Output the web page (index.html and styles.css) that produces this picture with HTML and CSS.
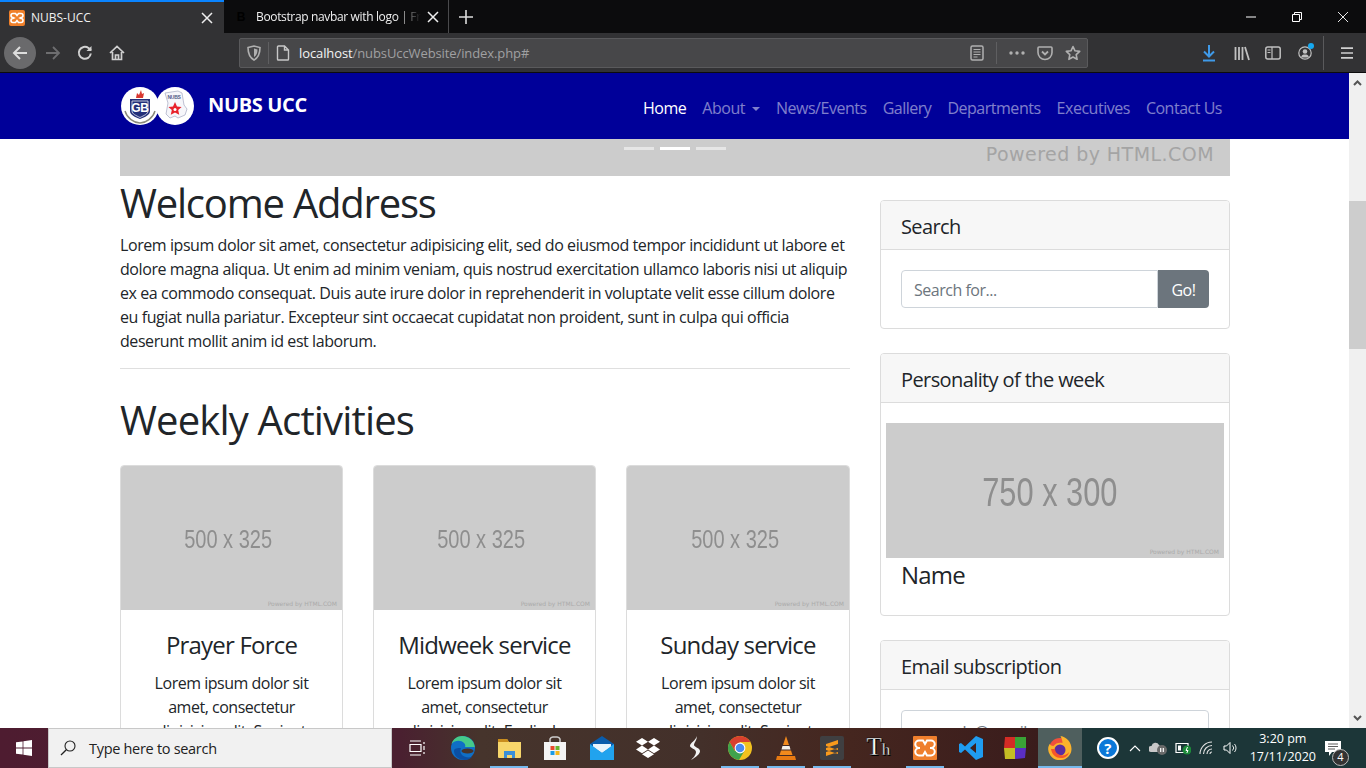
FILE: index.html
```html
<!doctype html>
<html>
<head>
<meta charset="utf-8">
<title>NUBS-UCC</title>
<link rel="stylesheet" href="styles.css">
</head>
<body>

<div class="tabbar">
	<div class="tab tab-on">
		<svg class="fav" width="16" height="16" viewBox="0 0 16 16"><rect width="16" height="16" rx="2" fill="#f0802a"/><path d="M4 3.500h2.500L8 5.500l1.500-2H12a1.500 1.500 0 0 1 0 4L11 8l1 .5a1.500 1.500 0 0 1 0 4H9.500L8 10.500l-1.500 2H4a1.500 1.500 0 0 1 0-4L5 8l-1-.5a1.500 1.500 0 0 1 0-4z" fill="none" stroke="#fff" stroke-width="1.600"/></svg>
		<span class="tab-name">NUBS-UCC</span>
		<svg class="tab-x" width="12" height="12" viewBox="0 0 12 12"><path d="M1 1l10 10M11 1L1 11" stroke="#eee" stroke-width="1.500"/></svg>
	</div>
	<div class="tab tab-off">
		<span class="fav-b">B</span>
		<span class="tab-name tab-fade">Bootstrap navbar with logo | Free</span>
		<svg class="tab-x" width="12" height="12" viewBox="0 0 12 12"><path d="M1 1l10 10M11 1L1 11" stroke="#eee" stroke-width="1.500"/></svg>
	</div>
	<svg class="tab-plus" width="14" height="14" viewBox="0 0 14 14"><path d="M7 0v14M0 7h14" stroke="#ddd" stroke-width="1.600"/></svg>
	<div class="win-btns">
		<svg width="12" height="12" viewBox="0 0 12 12"><path d="M1 6h10" stroke="#fff"/></svg>
		<svg width="12" height="12" viewBox="0 0 12 12"><path d="M3.500 3V1.500h7v7H9M1.500 3.500h7v7h-7z" fill="none" stroke="#fff"/></svg>
		<svg width="12" height="12" viewBox="0 0 12 12"><path d="M1 1l10 10M11 1L1 11" stroke="#fff" stroke-width=".9"/></svg>
	</div>
</div>

<div class="toolbar">
	<div class="back-btn">
		<svg width="16" height="16" viewBox="0 0 16 16"><path d="M15 8H2M8 2L2 8l6 6" fill="none" stroke="#ddd" stroke-width="2"/></svg>
	</div>
	<svg class="nav-ico" width="16" height="16" viewBox="0 0 16 16"><path d="M1 8h13M8 2l6 6-6 6" fill="none" stroke="#6e6e70" stroke-width="1.800"/></svg>
	<svg class="nav-ico" width="16" height="16" viewBox="0 0 16 16"><path d="M13.800 8.500A6 6 0 1 1 11.500 3L14 5" fill="none" stroke="#d0d0d0" stroke-width="2"/><path d="M14.500 1v5h-5z" fill="#d0d0d0"/></svg>
	<svg class="nav-ico" width="16" height="16" viewBox="0 0 16 16"><path d="M1 8l7-6.500L15 8M3.500 7v7.500h9V7M6.500 14.500V10h3v4.500" fill="none" stroke="#d0d0d0" stroke-width="1.700"/></svg>
	<div class="urlbar">
		<svg width="14" height="16" viewBox="0 0 14 16"><path d="M1 2.500L7 1l6 1.500c0 6-1.500 10-6 12.500C2.500 12.500 1 8.500 1 2.500z" fill="none" stroke="#b0b0b0" stroke-width="1.600"/><path d="M7 3.500l3.500 1C10.500 8 9.500 10.500 7 12z" fill="#b0b0b0"/></svg>
		<i class="url-sep"></i>
		<svg width="14" height="16" viewBox="0 0 14 16"><path d="M2.500 1h6L12.500 5v9.200a.8.8 0 0 1-.8.800H2.300a.8.8 0 0 1-.8-.8V2a1 1 0 0 1 1-1zM8.500 1v4h4" fill="none" stroke="#c8c8c8" stroke-width="1.400"/></svg>
		<span class="url-text"><b>localhost</b>/nubsUccWebsite/index.php#</span>
		<svg class="url-right" width="14" height="16" viewBox="0 0 14 16"><rect x="1" y="1" width="12" height="14" rx="1.500" fill="none" stroke="#b0b0b0" stroke-width="1.500"/><path d="M3.500 4.500h7M3.500 7h7M3.500 9.500h7M3.500 12h4" stroke="#b0b0b0"/></svg>
		<i class="url-sep url-sep2"></i>
		<svg width="16" height="4" viewBox="0 0 16 4"><circle cx="2" cy="2" r="1.700" fill="#b0b0b0"/><circle cx="8" cy="2" r="1.700" fill="#b0b0b0"/><circle cx="14" cy="2" r="1.700" fill="#b0b0b0"/></svg>
		<svg width="16" height="16" viewBox="0 0 16 16"><path d="M2 2h12a1 1 0 0 1 1 1v4.500a7 7 0 0 1-14 0V3a1 1 0 0 1 1-1z" fill="none" stroke="#b0b0b0" stroke-width="1.600"/><path d="M5 6.500l3 3 3-3" fill="none" stroke="#b0b0b0" stroke-width="1.800"/></svg>
		<svg width="16" height="16" viewBox="0 0 16 16"><path d="M8 1.500l2 4.300 4.700.6-3.500 3.200.9 4.700L8 12l-4.100 2.300.9-4.700L1.300 6.400l4.700-.6z" fill="none" stroke="#b0b0b0" stroke-width="1.600" stroke-linejoin="round"/></svg>
	</div>
	<div class="tool-right">
		<svg width="14" height="18" viewBox="0 0 14 18"><path d="M7 1v11M2 7.500l5 5 5-5" fill="none" stroke="#3f9ae8" stroke-width="2"/><path d="M1 16.500h12" stroke="#3f9ae8" stroke-width="2"/></svg>
		<svg class="ico-lib" width="16" height="16" viewBox="0 0 16 16"><path d="M1.500 2v13M5 2v13M8.500 2v13M11 2l4 13" stroke="#c0c0c0" stroke-width="1.800" fill="none"/></svg>
		<svg class="ico-side" width="16" height="14" viewBox="0 0 16 14"><rect x=".8" y="1" width="14.400" height="12" rx="2" fill="none" stroke="#c0c0c0" stroke-width="1.500"/><path d="M7 1v12M2.500 4h3M2.500 6.500h3" stroke="#c0c0c0" stroke-width="1.200"/></svg>
		<div class="acct">
			<svg width="14" height="14" viewBox="0 0 14 14"><circle cx="7" cy="7" r="6.200" fill="none" stroke="#c0c0c0" stroke-width="1.200"/><circle cx="7" cy="5.500" r="2.300" fill="#c0c0c0"/><path d="M3 11.500c.5-2.500 2-3 4-3s3.500.5 4 3" fill="#c0c0c0"/></svg>
			<i class="acct-dot"></i>
		</div>
		<i class="tool-sep"></i>
		<svg width="12" height="12" viewBox="0 0 12 12"><path d="M0 1.200h12M0 6h12M0 10.800h12" stroke="#d0d0d0" stroke-width="1.700"/></svg>
	</div>
</div>

<div class="viewport">
	<div class="page">
		<nav class="navbar">
			<div class="container nav-in">
				<a class="brand" href="#">
					<svg class="logo" width="75" height="38" viewBox="0 0 75 38">
						<circle cx="55" cy="19" r="19" fill="#fff"/>
						<path d="M45 6l13-2 4 2 2 12 3 4-2 6-7 3-3-2-5 2-4-4 2-11z" fill="#f6f6fa" stroke="#aeb2c8" stroke-width=".8"/>
						<text x="54" y="12" font-size="5" text-anchor="middle" fill="#555c88" font-family="Liberation Sans">NUBS</text>
						<path d="M55 15l2 4.400 4.600.6-3.400 3.100 1 4.700L55 25.400l-4.200 2.400 1-4.700-3.400-3.100 4.600-.6z" fill="#e8202a"/>
						<circle cx="55" cy="22.500" r="1.500" fill="#fff"/>
						<circle cx="20" cy="19" r="19" fill="#fff"/>
						<path d="M10 12h20v12c0 4-5 6-10 8-5-2-10-4-10-8z" fill="#23307a"/>
						<path d="M12 14h16v10c0 3-4 4.500-8 6.500-4-2-8-3.500-8-6.500z" fill="none" stroke="#fff" stroke-width=".7"/>
						<text x="20" y="25" font-size="12" font-weight="bold" text-anchor="middle" fill="#fff" font-family="Liberation Sans">GB</text>
						<path d="M16 11l1-5 2 2 2-5 1 4 2-1-1 5z" fill="#d8372f"/>
						<path d="M5 24c2 7 9 12 15 12s13-5 15-12" fill="none" stroke="#8a8a7a" stroke-width="1.400"/>
					</svg>
					<span class="brand-name">NUBS UCC</span>
				</a>
				<ul class="nav-links">
					<li class="active"><a href="#">Home</a></li>
					<li><a href="#">About<i class="caret"></i></a></li>
					<li><a href="#">News/Events</a></li>
					<li><a href="#">Gallery</a></li>
					<li><a href="#">Departments</a></li>
					<li><a href="#">Executives</a></li>
					<li><a href="#">Contact Us</a></li>
				</ul>
			</div>
		</nav>

		<div class="container">
			<div class="carousel">
				<ol class="indicators"><li></li><li class="on"></li><li></li></ol>
				<span class="powered-big">Powered by HTML.COM</span>
			</div>
			<div class="row">
				<main class="col-main">
					<h1 class="welcome">Welcome Address</h1>
					<p class="intro">Lorem ipsum dolor sit amet, consectetur adipisicing elit, sed do eiusmod tempor incididunt ut labore et dolore magna aliqua. Ut enim ad minim veniam, quis nostrud exercitation ullamco laboris nisi ut aliquip ex ea commodo consequat. Duis aute irure dolor in reprehenderit in voluptate velit esse cillum dolore eu fugiat nulla pariatur. Excepteur sint occaecat cupidatat non proident, sunt in culpa qui officia deserunt mollit anim id est laborum.</p>
					<hr>
					<h1 class="weekly">Weekly Activities</h1>
					<div class="cards">
						<div class="card">
							<div class="ph ph-card"><span>500 x 325</span><small>Powered by HTML.COM</small></div>
							<div class="card-body">
								<h4>Prayer Force</h4>
								<p>Lorem ipsum dolor sit amet, consectetur adipisicing elit. Sapiente esse</p>
							</div>
						</div>
						<div class="card">
							<div class="ph ph-card"><span>500 x 325</span><small>Powered by HTML.COM</small></div>
							<div class="card-body">
								<h4>Midweek service</h4>
								<p>Lorem ipsum dolor sit amet, consectetur adipisicing elit. Explicabo esse</p>
							</div>
						</div>
						<div class="card">
							<div class="ph ph-card"><span>500 x 325</span><small>Powered by HTML.COM</small></div>
							<div class="card-body">
								<h4>Sunday service</h4>
								<p>Lorem ipsum dolor sit amet, consectetur adipisicing elit. Sapiente esse</p>
							</div>
						</div>
					</div>
				</main>
				<aside class="col-side">
					<div class="box">
						<h5 class="box-head">Search</h5>
						<div class="box-body">
							<div class="input-group">
								<input class="field field-join" type="text" placeholder="Search for...">
								<button class="go" type="button">Go!</button>
							</div>
						</div>
					</div>
					<div class="box">
						<h5 class="box-head">Personality of the week</h5>
						<div class="person">
							<div class="ph ph-person"><span>750 x 300</span><small>Powered by HTML.COM</small></div>
							<h4 class="person-name">Name</h4>
						</div>
					</div>
					<div class="box">
						<h5 class="box-head">Email subscription</h5>
						<div class="box-body">
							<input class="field field-full" type="text" placeholder="example@email.com">
						</div>
					</div>
				</aside>
			</div>
		</div>
	</div>
	<div class="scrollbar">
		<svg width="9" height="6" viewBox="0 0 9 6"><path d="M1 5l3.500-3.500L8 5" fill="none" stroke="#555" stroke-width="2"/></svg>
		<div class="track"><div class="thumb"></div></div>
		<svg width="9" height="6" viewBox="0 0 9 6"><path d="M1 1l3.500 3.500L8 1" fill="none" stroke="#555" stroke-width="2"/></svg>
	</div>
</div>

<div class="taskbar">
	<div class="start">
		<svg width="16" height="16" viewBox="0 0 16 16"><path d="M0 2.300l6.600-.9v6.200H0zM7.400 1.300L16 0v7.600H7.400zM0 8.400h6.600v6.200L0 13.700zM7.400 8.400H16V16l-8.600-1.300z" fill="#fff"/></svg>
	</div>
	<div class="search">
		<svg width="16" height="16" viewBox="0 0 16 16"><circle cx="10" cy="6" r="5" fill="none" stroke="#222" stroke-width="1.100"/><path d="M6.300 9.700L1 15" stroke="#222" stroke-width="1.300"/></svg>
		<span>Type here to search</span>
	</div>
	<div class="task-icons">
		<div class="ti">
			<svg width="16" height="16" viewBox="0 0 16 16"><path d="M1 1h11M1 15h11M1 4.500h11v7H1z" fill="none" stroke="#fff" stroke-width="1.200"/><path d="M15 2v2M15 6v4M15 12v2" stroke="#fff" stroke-width="1.200"/></svg>
		</div>
		<div class="ti">
			<svg width="24" height="24" viewBox="0 0 24 24"><circle cx="12" cy="12" r="12" fill="#0f6fc6"/><path d="M24 13C24 5 18 0 11 0 6 0 2 3 .5 8 4 4 10 4 13 7c1.500 1.500 1.500 3 1 4h9.500z" fill="#45c98a"/><path d="M3 15c0 6 6 9 11 9 3 0 5-1 7-3-4 1-8 0-10-2-2-2-2-5-1-7-3 0-7 0-7 3z" fill="#0b4fa3"/><ellipse cx="16.500" cy="15" rx="6" ry="2.600" fill="#46342c"/></svg>
		</div>
		<div class="ti ti-run">
			<svg width="23" height="20" viewBox="0 0 23 20"><path d="M0 1h9l2 3h12v15a1 1 0 0 1-1 1H1a1 1 0 0 1-1-1z" fill="#f7d66b"/><path d="M0 1h9l2 3H0z" fill="#c98d1e"/><path d="M6 13h11v7h-3v-3H9v3H6z" fill="#3a8fd8"/></svg>
		</div>
		<div class="ti">
			<svg width="24" height="24" viewBox="0 0 24 24"><path d="M7 7V3a3 3 0 0 1 3-2h4a3 3 0 0 1 3 2v4" fill="none" stroke="#ccc" stroke-width="1.500"/><rect x="1" y="6" width="22" height="18" fill="#f4f4f4"/><rect x="7.500" y="10" width="4" height="4" fill="#e8492c"/><rect x="12.500" y="10" width="4" height="4" fill="#6ab52e"/><rect x="7.500" y="15" width="4" height="4" fill="#1c9be6"/><rect x="12.500" y="15" width="4" height="4" fill="#f6b81b"/></svg>
		</div>
		<div class="ti">
			<svg width="24" height="24" viewBox="0 0 24 24"><path d="M0 8L12 0l12 8v16H0z" fill="#0a5cab"/><path d="M3 8h18v3l-9 6-9-6z" fill="#e8f4fc"/><path d="M0 8l12 9 12-9v16H0z" fill="#21a3ee"/></svg>
		</div>
		<div class="ti">
			<svg width="24" height="20" viewBox="0 0 24 20"><path d="M6 0l6 3.800L6 7.600 0 3.800zM18 0l6 3.800-6 3.800-6-3.800zM6 7.600l6 3.800-6 3.800-6-3.800zM18 7.600l6 3.800-6 3.800-6-3.800zM12 12.500l6 3.700-6 3.800-6-3.800z" fill="#fff"/></svg>
		</div>
		<div class="ti">
			<svg width="12" height="24" viewBox="0 0 12 24"><path d="M9 0C8 4 2 7 2 10c0 2 6 3 6 6 0 3-3 6-5 8 5-3 9-6 9-9 0-3-6-4-6-6 0-2 3-5 3-9z" fill="#f2f2f2"/></svg>
		</div>
		<div class="ti ti-run">
			<svg width="24" height="24" viewBox="0 0 24 24"><circle cx="12" cy="12" r="12" fill="#f2c21f"/><path d="M12 0a12 12 0 0 0-10.400 6L6.800 15 12 6h10.400A12 12 0 0 0 12 0z" fill="#d8402e"/><path d="M1.600 6A12 12 0 0 0 11 24l5.300-9-9.500 0z" fill="#3fa24c"/><circle cx="12" cy="12" r="5.400" fill="#fff"/><circle cx="12" cy="12" r="4.300" fill="#4a8af0"/></svg>
		</div>
		<div class="ti ti-run">
			<svg width="20" height="24" viewBox="0 0 20 24"><path d="M10 0l3 9H7z" fill="#f28a1c"/><path d="M6.500 10h7l1 3.500h-9z" fill="#f4f0ea"/><path d="M5 14.500h10l1.500 4.500h-13z" fill="#f28a1c"/><path d="M1 20h18l1 4H0z" fill="#e87a12"/></svg>
		</div>
		<div class="ti ti-run">
			<svg width="24" height="24" viewBox="0 0 24 24"><rect width="24" height="24" rx="2" fill="#3f3f41"/><path d="M18 4L6 8v4l12-4zM6 10l12 4v4L6 14zM18 12L6 16v4l12-4z" fill="#f89a1c"/></svg>
		</div>
		<div class="ti">
			<span class="th">T<small>h</small></span>
		</div>
		<div class="ti ti-run">
			<svg width="24" height="24" viewBox="0 0 24 24"><rect width="24" height="24" rx="1" fill="#ef7f2d"/><path d="M6 4.500h4L12 8l2-3.500h4a3 3 0 0 1 0 7.500h-1 1a3 3 0 0 1 0 7.500h-4L12 16l-2 3.500H6A3 3 0 0 1 6 12h1-1a3 3 0 0 1 0-7.500z" fill="none" stroke="#fff" stroke-width="2"/></svg>
		</div>
		<div class="ti">
			<svg width="24" height="24" viewBox="0 0 24 24"><path d="M17 0l7 3v18l-7 3L6 13.500 2 17l-2-1V8l2-1 4 3.500zM17 7l-6 5 6 5z" fill="#1f9cf0"/></svg>
		</div>
		<div class="ti ti-multi">
			<svg width="23" height="24" viewBox="0 0 23 24"><path d="M1 1h10v11H0z" fill="#d42c25"/><path d="M11 1h11v11H11z" fill="#3aa236"/><path d="M0 12h11v11H1z" fill="#c4bd24"/><path d="M11 12h11l-1 10-10 1z" fill="#5a2ec2"/></svg>
		</div>
		<div class="ti ti-active">
			<svg width="24" height="24" viewBox="0 0 24 24"><circle cx="12" cy="13" r="11" fill="#f0503c"/><path d="M1.500 8c1 1 2 2 4 2 2-3 6-4 9-3 0-2-1-5-2-7 6 1 11 6 11 13 0 6-5 11-11 11a11 11 0 0 1-11-16z" fill="#fbb32c"/><circle cx="12" cy="14" r="5.500" fill="#5b2ca0"/><path d="M3 13c1 6 5 9 10 9 4 0 7-2 8-6-2 3-6 4-9 3-3-1-5-3-5-6z" fill="#f5562a"/></svg>
		</div>
	</div>
	<div class="tray">
		<div class="help">?</div>
		<svg width="12" height="7" viewBox="0 0 12 7"><path d="M1 6l5-5 5 5" fill="none" stroke="#fff" stroke-width="1.100"/></svg>
		<svg width="18" height="14" viewBox="0 0 18 14"><path d="M2 11a3 3 0 0 1 .5-6A4 4 0 0 1 10 4a3 3 0 0 1 1 1v6z" fill="#c8c8c8"/><circle cx="13" cy="9" r="5" fill="#6a6a6a"/><path d="M11.700 7v4M14.300 7v4" stroke="#fff" stroke-width="1.200"/></svg>
		<svg width="16" height="14" viewBox="0 0 16 14"><path d="M1 2.500h12v9H1z" fill="none" stroke="#fff" stroke-width="1.200"/><path d="M3 4.500h3v5H3z" fill="#fff"/><circle cx="12" cy="9" r="4.500" fill="#1d8a3a"/><path d="M12.500 6L11 9.500h2L11.800 12" stroke="#fff" fill="none"/></svg>
		<svg width="16" height="14" viewBox="0 0 16 14"><path d="M1 13A12 12 0 0 1 13 1M4.500 13A8.500 8.500 0 0 1 13 4.500M8 13a5 5 0 0 1 5-5M11 13a2 2 0 0 1 2-2" fill="none" stroke="#e4e4e4" stroke-width="1.100"/></svg>
		<svg width="16" height="14" viewBox="0 0 16 14"><path d="M1 5h2.500L7 1.500v11L3.500 9H1z" fill="none" stroke="#fff" stroke-width="1"/><path d="M9.500 4.500a3.500 3.500 0 0 1 0 5M11.500 3a6 6 0 0 1 0 8" fill="none" stroke="#fff" stroke-width=".9"/></svg>
		<div class="clock"><span>3:20 pm</span><span>17/11/2020</span></div>
		<div class="notif">
			<svg width="16" height="15" viewBox="0 0 16 15"><path d="M0 0h16v11H7l-3 4v-4H0z" fill="#fff"/><path d="M3 3h10M3 5.500h10M3 8h7" stroke="#333" stroke-width=".8"/></svg>
			<b class="notif-num">4</b>
		</div>
	</div>
</div>

</body>
</html>
```

FILE: styles.css
```css
*{
	margin:0; padding:0; box-sizing:border-box; list-style:none;
}
html,body{
	height:100%; overflow:hidden;
}
body{
	display:flex; flex-direction:column; background:#fff;
	font-family:"Open Sans","Noto Sans","Liberation Sans",sans-serif;
	font-size:16px; line-height:24px; color:#212529;
}
a{ text-decoration:none; }
svg{ display:block; flex:none; }

/* browser chrome */
.tabbar{
	height:33px; background:#0c0c0d; display:flex; align-items:stretch; flex:none;
	font-size:12px; color:#f0f0f0;
}
.tab{
	display:flex; align-items:center; height:33px; position:relative;
}
.tab-on{
	width:224px; background:#323234; border-top:2px solid #0a84ff; padding:0 11px 0 9px;
}
.tab-off{
	width:225px; padding:0 9px 0 9px; border-right:1px solid #4a4a4c;
}
.tab-name{ margin-left:6px; white-space:nowrap; flex:1; overflow:hidden; }
.tab-fade{
	margin-left:7px; letter-spacing:-.35px;
	-webkit-mask-image:linear-gradient(90deg,#000 85%,transparent);
	mask-image:linear-gradient(90deg,#000 85%,transparent);
}
.tab-x{ margin-left:6px; }
.fav-b{
	width:16px; text-align:center; font-weight:bold; font-size:12px; color:#000;
	font-family:"Liberation Sans",sans-serif;
}
.tab-plus{ align-self:center; margin-left:10px; }
.win-btns{
	margin-left:auto; display:flex; align-items:center; gap:34px; padding-right:17px;
}

.toolbar{
	height:40px; background:#323234; display:flex; align-items:center; flex:none;
	padding-left:4px; border-bottom:1px solid #0c0c0d;
}
.back-btn{
	width:32px; height:32px; border-radius:50%; background:#6a6a6c;
	display:flex; align-items:center; justify-content:center;
}
.nav-ico{ margin-left:16px; }
.back-btn + .nav-ico{ margin-left:9px; }
.urlbar{
	width:849px; height:30px; margin-left:114px;
	background:#474749; border:1px solid #5a5a5c; border-radius:2px;
	display:flex; align-items:center; padding:0 6px 0 7px; font-size:13px;
}
.url-sep{ width:1px; height:22px; background:#5f5f61; margin:0 7px; }
.url-sep2{ margin:0 12px 0 12px; }
.url-text{ color:#a0a0a2; margin-left:9px; flex:1; white-space:nowrap; letter-spacing:-.1px; }
.url-text b{ font-weight:normal; color:#f4f4f4; }
.urlbar svg:nth-last-of-type(2){ margin-right:12px; }
.urlbar svg:nth-last-of-type(3){ margin-right:12px; }
.tool-right{
	display:flex; align-items:center; margin-left:auto; height:100%;
}
.tool-right > svg:first-child{ margin-right:17px; position:relative; left:-1px; }
.ico-lib{ margin-right:15px; }
.ico-side{ margin-right:17px; }
.acct{ position:relative; }
.acct-dot{
	position:absolute; left:10px; top:-3px; width:6px; height:6px; border-radius:50%;
	background:#16a9f0;
}
.tool-sep{ width:1px; height:34px; background:#5a5a5c; margin:0 17px 0 11px; }
.tool-right > svg:last-child{ margin-right:13px; }

/* page */
.viewport{
	flex:1; display:flex; overflow:hidden; min-height:0;
}
.page{ flex:1; min-width:0; letter-spacing:-.48px; }
.container{ width:1140px; padding:0 15px; margin-left:105px; }
.navbar{ height:66px; background:#000099; }
.nav-in{ display:flex; align-items:center; height:100%; }
.brand{ display:flex; align-items:center; color:#fff; font-size:20px; font-weight:bold; letter-spacing:-.35px; }
.logo{ margin-right:13px; }
.brand-name{ position:relative; top:-1px; }
.nav-links{ margin-left:auto; display:flex; gap:16px; font-size:16px; position:relative; top:2px; padding-right:8px; }
.nav-links a{ color:rgba(255,255,255,.5); white-space:nowrap; }
.nav-links .active a{ color:#fff; }
.caret{
	display:inline-block; width:0; height:0; margin-left:7px; vertical-align:3px;
	border-top:4.800px solid; border-left:4.800px solid transparent; border-right:4.800px solid transparent;
}

.carousel{
	height:37px; background:#ccc; position:relative; overflow:hidden;
}
.indicators{
	position:absolute; left:504px; top:8px; display:flex; gap:6px;
}
.indicators li{ width:30px; height:3px; background:#fff; opacity:.5; }
.indicators li.on{ opacity:1; }
.powered-big{
	position:absolute; right:16px; top:3px; font-family:"DejaVu Sans",sans-serif; font-size:19px;
	color:#a4a4a4; letter-spacing:.45px;
}

.row{ display:flex; gap:30px; }
.col-main{ width:730px; }
.col-side{ width:350px; padding-top:24px; }
h1{ font-size:40px; font-weight:normal; line-height:48px; }
.welcome{ margin-top:3px; margin-bottom:6px; letter-spacing:-1.21px; }
.intro{ margin-bottom:15px; letter-spacing:-.425px; }
hr{ border:0; border-top:1px solid #dfdfdf; }
.weekly{ margin-top:27px; margin-bottom:21px; letter-spacing:-.83px; }
.cards{ display:grid; grid-template-columns:223px 223px 224px; column-gap:30px; }
.card{
	border:1px solid #dcdcdc; border-radius:4px; overflow:hidden; text-align:center;
}
.card-body{ padding:20px; }
.card-body h4{ font-size:24px; font-weight:normal; line-height:30px; margin-bottom:11px; white-space:nowrap; letter-spacing:-.8px; }
.ph{
	background:#ccc; position:relative; display:flex; align-items:center; justify-content:center;
	color:#8e8e8e; font-family:"Liberation Sans",sans-serif; letter-spacing:0;
}
.ph span{ display:block; transform:scaleX(.77); }
.ph small{
	position:absolute; right:5px; bottom:2px; font-size:6px; line-height:9px; color:#aaa;
	font-family:"DejaVu Sans",sans-serif;
}
.ph-card{ height:144px; font-size:26px; padding:2px 6px 0 0; }
.ph-person{ height:135px; font-size:40px; padding:3px 10px 0 0; }

.box{
	border:1px solid #dcdcdc; border-radius:4px; margin-bottom:24px; overflow:hidden;
}
.box-head{
	font-size:20px; font-weight:normal; line-height:24px; padding:14px 20px 10px;
	height:49px; background:#f7f7f7; border-bottom:1px solid #dcdcdc; letter-spacing:-.6px;
}
.box-body{ padding:20px; }
.input-group{ display:flex; }
.field{
	height:38px; border:1px solid #ced4da; border-radius:4px; padding:1px 12px 0;
	font:inherit; letter-spacing:-.48px; color:#495057; background:#fff;
}
.field::placeholder{ color:#6c757d; opacity:1; }
.field-join{ flex:1; min-width:0; border-radius:4px 0 0 4px; }
.field-full{ width:100%; padding-top:5px; }
.go{
	width:51px; height:38px; background:#6c757d; color:#fff; border:0; border-radius:0 4px 4px 0;
	font:inherit; letter-spacing:-.48px; padding-top:1px;
}
.person{ padding:20px 5px 25px; }
.person-name{ font-size:24px; font-weight:normal; line-height:30px; padding:2px 15px 0; letter-spacing:-.8px; }

.scrollbar{
	width:17px; background:#f0f0f0; display:flex; flex-direction:column; align-items:center;
	padding:7px 0; flex:none;
}
.track{ flex:1; width:100%; margin:0; padding-top:115px; }
.thumb{ height:148px; background:#cdcdcd; }

/* taskbar */
.taskbar{
	height:40px; flex:none; display:flex; align-items:stretch;
	background:linear-gradient(90deg,#4e1c30 0,#4a2030 400px,#46342c 480px,#43302a 700px,#45261f 850px,#3a1c1c 1038px);
}
.start{ width:48px; display:flex; align-items:center; justify-content:center; flex:none; }
.search{
	width:344px; flex:none; background:#f1f1f1; border:1px solid #c8c8c8; display:flex; align-items:center;
	gap:13px; padding-left:11px; font-size:14.500px; color:#222; letter-spacing:-.3px;
}
.search span{ position:relative; top:1px; }
.task-icons{ display:flex; flex:none; margin-left:2px; }
.ti{
	width:46.150px; display:flex; align-items:center; justify-content:center; position:relative;
}
.ti-multi{ width:44px; }
.ti-run::after{
	content:""; position:absolute; left:4px; right:4px; bottom:0; height:2px; background:#76b9ed;
}
.ti-active{ background:#4f5f5e; width:44px; }
.ti-active::after{
	content:""; position:absolute; left:0; right:0; bottom:0; height:2px; background:#76b9ed;
}
.th{
	font-family:"Liberation Serif",serif; font-size:25px; color:#fff; line-height:24px;
	-webkit-text-stroke:.3px #000; text-shadow:1px 1px #000;
}
.th small{ font-size:17px; }
.tray{
	flex:1; display:flex; align-items:center; gap:8px; padding-left:15px; color:#fff; font-size:12px;
	background:#1c3638;
}
.help{
	width:22px; height:22px; border-radius:50%; background:#0a78d8; border:2px solid #fff;
	text-align:center; font-weight:bold; font-size:15px; line-height:18px; margin-right:2px;
}
.clock{
	display:flex; flex-direction:column; align-items:center; line-height:18px; margin-left:4px;
	font-size:12.500px; width:64px;
}
.notif{ position:relative; margin-left:2px; }
.notif-num{
	position:absolute; left:7px; top:8px; width:17px; height:17px; border-radius:50%;
	background:#333; border:1.500px solid #bbb; font-size:11px; font-weight:normal; line-height:14px;
	text-align:center;
}
```
